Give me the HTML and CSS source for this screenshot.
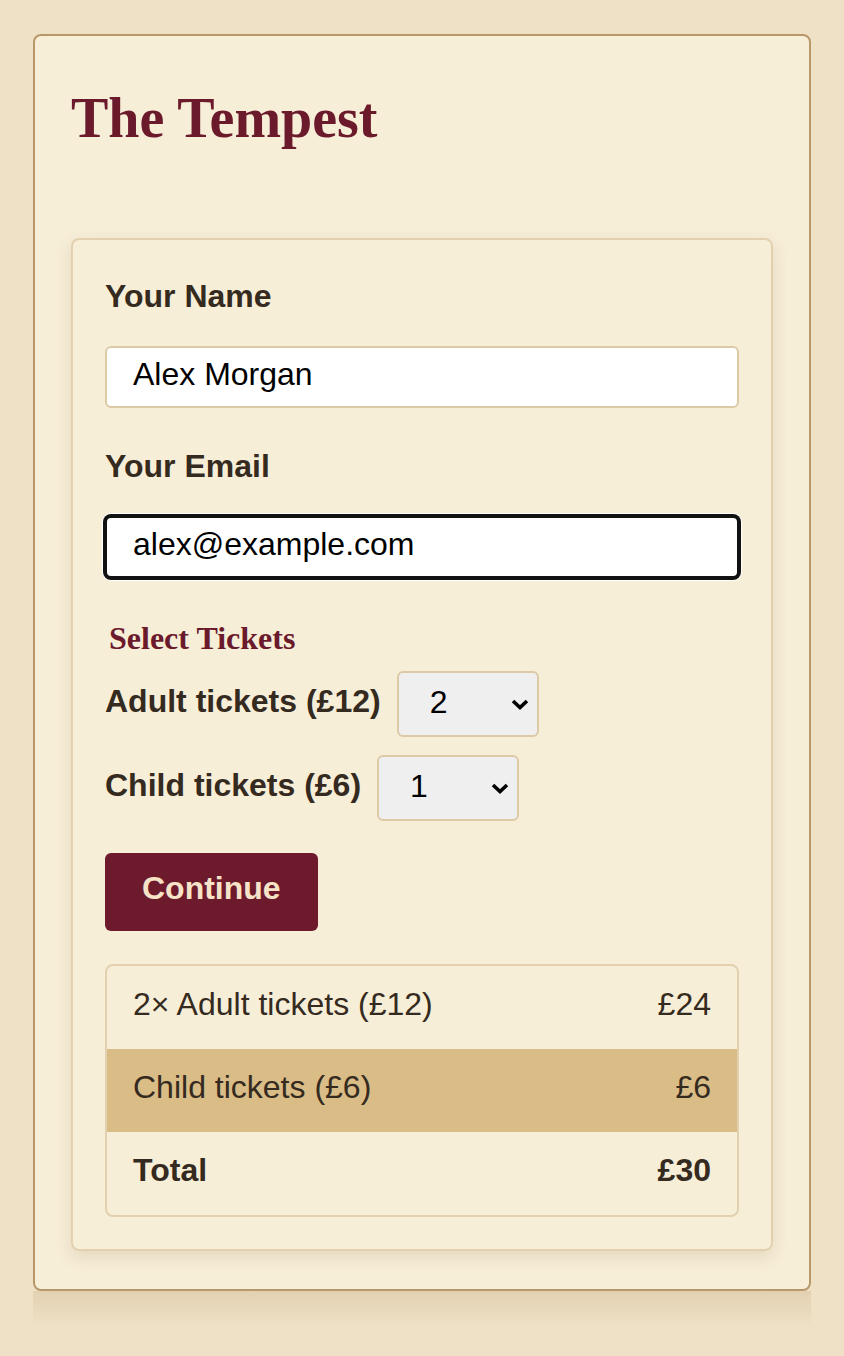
FILE: index.html
```html
<!DOCTYPE html>
<html lang="en">
<head>
  <meta charset="UTF-8" />
  <title>The Tempest - Tickets</title>
  <meta name="viewport" content="width=device-width, initial-scale=1.0"/>
  <link rel="stylesheet" href="styles.css">
</head>
<body>
  <div class="page">
    <!-- main card -->
    <div class="card">
      <h1 class="title">The Tempest</h1>

      <form class="booking">
        <div class="field">
          <label class="field-label" for="name">Your Name</label>
          <input class="text-input" id="name" type="text" value="Alex Morgan" />
        </div>
        <div class="field">
          <label class="field-label" for="email">Your Email</label>
          <input class="text-input is-focused" id="email" type="email" value="alex@example.com" />
        </div>

        <!-- tickets -->
        <div class="tickets">
          <div class="tickets-title">Select Tickets</div>
          <div class="ticket-row">
            <label class="ticket-label" for="adult">Adult tickets (£12)</label>
            <span class="select-wrap">
              <select class="ticket-select" id="adult">
                <option>0</option><option>1</option><option selected>2</option><option>3</option>
                <option>4</option><option>5</option><option>6</option><option>7</option>
                <option>8</option><option>9</option>
              </select>
              <svg class="select-arrow" viewBox="0 0 18 11"><polyline points="2,2 9,8.5 16,2" /></svg>
            </span>
          </div>
          <div class="ticket-row">
            <label class="ticket-label" for="child">Child tickets (£6)</label>
            <span class="select-wrap">
              <select class="ticket-select" id="child">
                <option>0</option><option selected>1</option><option>2</option><option>3</option>
                <option>4</option><option>5</option><option>6</option><option>7</option>
                <option>8</option><option>9</option>
              </select>
              <svg class="select-arrow" viewBox="0 0 18 11"><polyline points="2,2 9,8.5 16,2" /></svg>
            </span>
          </div>
        </div>

        <button class="continue-btn" type="button">Continue</button>

        <!-- order summary -->
        <div class="summary">
          <div class="summary-row">
            <span>2× Adult tickets (£12)</span>
            <span>£24</span>
          </div>
          <div class="summary-row highlight">
            <span>Child tickets (£6)</span>
            <span>£6</span>
          </div>
          <div class="summary-row total">
            <span>Total</span>
            <span>£30</span>
          </div>
        </div>
      </form>
    </div>
    <div class="card-floor"></div>
  </div>
</body>
</html>
```

FILE: styles.css
```css
/* page */
body {
  margin: 0;
  background: #efe1c6;
  font-family: "Liberation Sans", Arial, sans-serif;
  color: #352a20;
}
.page {
  padding: 34px 33px 0 33px;
}

/* main card */
.card {
  background: #f7eed8;
  border: 2px solid #b8986a;
  border-radius: 8px;
  padding: 36px 36px 38px 36px;
}
.card-floor {
  height: 36px;
  background: linear-gradient(rgba(150, 110, 50, 0.14), rgba(150, 110, 50, 0));
}
.title {
  font-family: "Liberation Serif", "Times New Roman", serif;
  font-size: 56px;
  line-height: 64px;
  font-weight: bold;
  color: #6b1a2c;
  margin: 14px 0 88px 0;
}

/* form panel */
.booking {
  border: 2px solid #e2d0ae;
  border-radius: 8px;
  padding: 32px;
  box-shadow: 0 6px 16px rgba(110, 80, 30, 0.14);
}
.field {
  margin-bottom: 34px;
}
.field-label {
  display: block;
  font-size: 32px;
  line-height: 48px;
  font-weight: bold;
  margin-bottom: 26px;
}
.text-input {
  display: block;
  width: 100%;
  box-sizing: border-box;
  font-family: inherit;
  font-size: 32px;
  line-height: 36px;
  padding: 8px 26px 14px 26px;
  border: 2px solid #dccaa6;
  border-radius: 6px;
  background: #fff;
  color: #000;
  outline: none;
}
.text-input.is-focused {
  border-color: #111;
  box-shadow: 0 0 0 2px #111, 0 0 0 3px #fff;
}

/* tickets */
.tickets-title {
  font-family: "Liberation Serif", "Times New Roman", serif;
  font-size: 32px;
  line-height: 48px;
  font-weight: bold;
  color: #6b1a2c;
  padding: 2px 0 0 4px;
  margin-bottom: 9px;
}
.ticket-row {
  display: flex;
  align-items: center;
  gap: 16px;
  margin-bottom: 18px;
}
.ticket-label {
  font-size: 32px;
  line-height: 37px;
  font-weight: bold;
  padding-bottom: 6px;
}
.select-wrap {
  position: relative;
  display: block;
}
.ticket-select {
  appearance: none;
  -webkit-appearance: none;
  display: block;
  box-sizing: border-box;
  width: 142px;
  font-family: inherit;
  font-size: 32px;
  line-height: 37px;
  padding: 11px 40px 14px 31px;
  border: 2px solid #dccaa6;
  border-radius: 6px;
  background-color: #efefef;
  color: #000;
}
/* chevron drawn over the select */
.select-arrow {
  position: absolute;
  right: 10px;
  top: 50%;
  width: 18px;
  height: 11px;
  margin-top: -5px;
  pointer-events: none;
  fill: none;
  stroke: #000;
  stroke-width: 3.6;
}

.continue-btn {
  display: block;
  margin-top: 32px;
  font-family: inherit;
  font-size: 32px;
  line-height: 37px;
  font-weight: bold;
  padding: 17px 37px 24px 37px;
  border: none;
  border-radius: 6px;
  background: #6e1a2d;
  color: #f6e3c8;
  cursor: pointer;
}

/* summary table */
.summary {
  margin-top: 33px;
  border: 2px solid #e2d0ae;
  border-radius: 8px;
  overflow: hidden;
}
.summary-row {
  display: flex;
  justify-content: space-between;
  font-size: 32px;
  line-height: 37px;
  padding: 20px 26px 26px 26px;
}
.summary-row.highlight {
  background: #d9bc86;
}
.summary-row.total {
  font-weight: bold;
}
```
